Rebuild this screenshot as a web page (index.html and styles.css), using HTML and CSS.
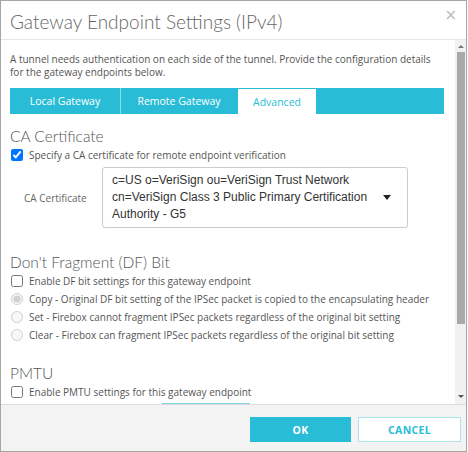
FILE: index.html
```html
<!DOCTYPE html>
<html>
<head>
<meta charset="utf-8">
<link rel="stylesheet" href="styles.css">
</head>
<body>
<div class="dialog">
  <div class="header">
    <h1 class="title">Gateway Endpoint Settings (IPv4)</h1>
    <span class="close">×</span>
  </div>
  <div class="middle">
    <div class="content">
      <p class="intro">A tunnel needs authentication on each side of the tunnel. Provide the configuration details for the gateway endpoints below.</p>
      <div class="tabs">
        <div class="tab tab-local">Local Gateway</div>
        <div class="tab tab-remote">Remote Gateway</div>
        <div class="tab tab-active">Advanced</div>
        <div class="tab tab-fill"></div>
      </div>
      <h2 class="section">CA Certificate</h2>
      <label class="row"><input type="checkbox" checked> <span>Specify a CA certificate for remote endpoint verification</span></label>
      <div class="field">
        <span class="field-label">CA Certificate</span>
        <div class="select">
          <div class="select-text">c=US o=VeriSign ou=VeriSign Trust Network cn=VeriSign Class 3 Public Primary Certification Authority - G5</div>
          <span class="caret"></span>
        </div>
      </div>
      <h2 class="section section-df">Don't Fragment (DF) Bit</h2>
      <label class="row"><input type="checkbox"> <span>Enable DF bit settings for this gateway endpoint</span></label>
      <label class="row"><input type="radio" name="df" checked disabled> <span>Copy - Original DF bit setting of the IPSec packet is copied to the encapsulating header</span></label>
      <label class="row"><input type="radio" name="df" disabled> <span>Set - Firebox cannot fragment IPSec packets regardless of the original bit setting</span></label>
      <label class="row"><input type="radio" name="df" disabled> <span>Clear - Firebox can fragment IPSec packets regardless of the original bit setting</span></label>
      <h2 class="section section-pmtu">PMTU</h2>
      <label class="row"><input type="checkbox"> <span>Enable PMTU settings for this gateway endpoint</span></label>
      <div class="cut-box"></div>
    </div>
    <div class="scrollbar">
      <span class="arrow-up"></span>
      <div class="thumb"></div>
      <span class="arrow-down"></span>
    </div>
  </div>
  <div class="footer">
    <button class="btn btn-ok">OK</button>
    <button class="btn btn-cancel">CANCEL</button>
  </div>
</div>
</body>
</html>
```
FILE: styles.css
```css
* { box-sizing: border-box; }
html, body { margin: 0; padding: 0; background: #fff; }
body { font-family: "Open Sans", "Liberation Sans", sans-serif; color: #555; }

.dialog {
  width: 467px;
  height: 452px;
  border: 1px solid #a6a6a6;
  display: flex;
  flex-direction: column;
  background: #fff;
}

.header {
  height: 39px;
  flex: none;
  display: flex;
  align-items: center;
  justify-content: space-between;
  padding: 3px 9px 0 9px;
  border-bottom: 1px solid #e6e6e6;
}
.title {
  margin: 0;
  font-family: "Lato", "Open Sans", sans-serif;
  font-weight: 300;
  font-size: 19px;
  color: #666;
}
.close {
  font-size: 15px;
  color: #bbb;
  margin-top: -13px;
  font-family: "DejaVu Sans", sans-serif;
}

.middle {
  flex: 1;
  display: flex;
  min-height: 0;
}
.content {
  flex: 1;
  overflow: hidden;
  padding: 13px 11px 0 9px;
}
.intro {
  margin: 0;
  font-size: 10px;
  line-height: 12.5px;
  color: #555;
}

.tabs {
  display: flex;
  height: 26px;
  margin-top: 10px;
  background: #29bcd6;
}
.tab {
  display: flex;
  align-items: center;
  justify-content: center;
  font-size: 10.5px;
  color: #fff;
  background: #29bcd6;
}
.tab-local { width: 111px; border-right: 1px solid #8fd9e7; }
.tab-remote { width: 116px; }
.tab-active { width: 80px; background: #fff; color: #29bcd6; border: 1px solid #29bcd6; border-bottom: none; }
.tab-fill { flex: 1; }

.section {
  margin: 12px 0 0;
  font-family: "Lato", "Open Sans", sans-serif;
  font-weight: 300;
  font-size: 15.5px;
  line-height: 20px;
  color: #555;
}
.section-df { margin-top: 24px; }
.section-pmtu { margin-top: 19px; }

.row {
  display: flex;
  align-items: center;
  height: 18px;
  font-size: 10px;
  color: #555;
}
.row input { margin: 0 6px 0 1px; width: 12px; height: 12px; }

.field {
  display: flex;
  align-items: center;
  margin-top: 3px;
}
.field-label {
  width: 92px;
  padding-left: 14px;
  font-size: 10px;
  color: #666;
}
.select {
  width: 306px;
  height: 61px;
  border: 1px solid #ccc;
  border-radius: 3px;
  display: flex;
  align-items: center;
  padding: 0 16px 0 9px;
}
.select-text {
  flex: 1;
  font-family: "Liberation Sans", Arial, sans-serif;
  font-size: 12px;
  line-height: 17px;
  color: #333;
}
.caret {
  width: 0; height: 0;
  border-left: 4.5px solid transparent;
  border-right: 4.5px solid transparent;
  border-top: 5px solid #222;
  margin-left: 8px;
}

.cut-box {
  margin: 2px 0 0 152px;
  width: 88px;
  height: 10px;
  border-top: 1px solid #7fd3e3;
}

.scrollbar {
  width: 11px;
  flex: none;
  background: #f1f1f1;
  display: flex;
  flex-direction: column;
  align-items: center;
  padding: 5px 0 6px;
}
.arrow-up, .arrow-down {
  width: 0; height: 0;
  border-left: 3px solid transparent;
  border-right: 3px solid transparent;
}
.arrow-up { border-bottom: 3px solid #777; }
.arrow-down { border-top: 3px solid #555; margin-top: auto; }
.thumb {
  width: 8px;
  height: 272px;
  margin-top: 4px;
  background: #a9a9a9;
}

.footer {
  height: 47px;
  flex: none;
  background: #f3f3f3;
  border-top: 1px solid #dcdcdc;
  display: flex;
  justify-content: flex-end;
  align-items: flex-start;
  padding: 12px 5px 0 0;
  gap: 7px;
}
.btn {
  height: 25px;
  font-family: "Open Sans", sans-serif;
  font-weight: 700;
  font-size: 10.5px;
  letter-spacing: 0.3px;
  cursor: pointer;
}
.btn-ok { width: 101px; background: #29bcd6; color: #fff; border: 1px solid #29bcd6; }
.btn-cancel { width: 103px; background: #fff; color: #29bcd6; border: 1px solid #a9e3ee; }
```
